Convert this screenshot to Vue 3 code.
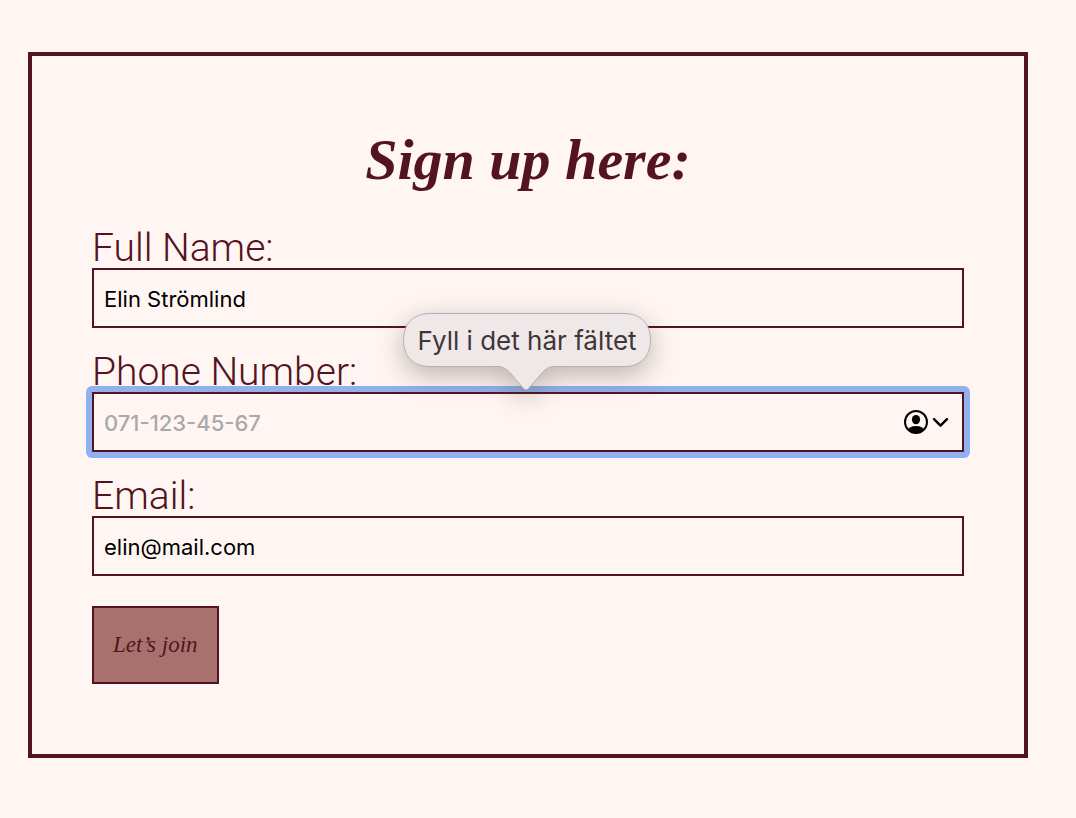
<script setup>
import { ref } from 'vue'

const name = ref('Elin Strömlind')
const phone = ref('')
const email = ref('elin@mail.com')
</script>

<template>
  <main class="card">
    <h1 class="title">Sign up here:</h1>
    <form class="form" @submit.prevent>
      <div class="field">
        <label class="label" for="name">Full Name:</label>
        <input id="name" v-model="name" class="input" type="text" />
      </div>
      <div class="field">
        <label class="label" for="phone">Phone Number:</label>
        <div class="control">
          <input id="phone" v-model="phone" class="input" type="tel" placeholder="071-123-45-67" />
          <button class="autofill" type="button" aria-label="Autofill contact">
            <svg width="46" height="26" viewBox="0 0 46 26">
              <defs>
                <clipPath id="face"><circle cx="13" cy="13" r="11" /></clipPath>
              </defs>
              <circle cx="13" cy="13" r="11" fill="none" stroke="#000" stroke-width="2" />
              <ellipse cx="13" cy="10.6" rx="4.1" ry="4.7" fill="#000" />
              <ellipse cx="13" cy="22" rx="8.5" ry="5" fill="#000" clip-path="url(#face)" />
              <path d="M31 10.200 L37.500 16.700 L44 10.200" fill="none" stroke="#000" stroke-width="2.4" stroke-linecap="round" stroke-linejoin="round" />
            </svg>
          </button>
          <div class="tip" role="alert">
            <svg class="bubble" width="248" height="78" viewBox="0 0 248 78">
              <path d="M27 .5 H221 C238 .5 247.500 11 247.500 27 C247.500 43 238 53.500 221 53.500 H152 C146 53.500 142 56 138 61 L126 75 Q123 78.500 120 75 L108 61 C104 56 100 53.500 94 53.500 H27 C10 53.500 .5 43 .5 27 C.5 11 10 .5 27 .5 Z" fill="#eee8e8" stroke="#b5afae" stroke-width="1" />
            </svg>
            <span class="message">Fyll i det här fältet</span>
          </div>
        </div>
      </div>
      <div class="field">
        <label class="label" for="email">Email:</label>
        <input id="email" v-model="email" class="input" type="email" />
      </div>
      <button class="submit" type="submit">Let’s join</button>
    </form>
  </main>
</template>

<style>
body {
  background: #fff6f3;
}
</style>

<style scoped>
.card {
  margin: 52px 48px 60px 28px;
  padding: 60px 60px 70px;
  border: 4px solid #541320;
  color: #541320;
  font-family: Inter, "Liberation Sans", sans-serif;
}
.title {
  margin: 0 0 20px;
  font: italic 700 58px/88px "Liberation Serif", cursive;
  text-align: center;
}
.form {
  display: flex;
  flex-direction: column;
  align-items: flex-start;
  gap: 20px;
}
.field {
  width: 100%;
}
.label {
  display: block;
  padding-top: 4px;
  font: 300 39px/40px Roboto, "Liberation Sans", sans-serif;
}
.control {
  position: relative;
}
.control::before {
  content: "";
  position: absolute;
  inset: -6px;
  border-radius: 6px;
  background: #92b0ee;
}
.input {
  position: relative;
  display: block;
  box-sizing: border-box;
  width: 100%;
  height: 60px;
  padding: 2px 10px 0;
  border: 2px solid #541320;
  border-radius: 0;
  outline: none;
  background: #fff6f3;
  color: #000;
  font: 400 22px/28px Inter, sans-serif;
}
.input::placeholder {
  color: #a9a9a9;
  font-weight: 500;
  opacity: 1;
}
.autofill {
  position: absolute;
  top: 17px;
  right: 15px;
  display: flex;
  padding: 0;
  border: 0;
  background: none;
}
.tip {
  position: absolute;
  bottom: 100%;
  left: 50%;
  width: 250px;
  height: 79px;
  transform: translateX(-50%);
}
.bubble {
  position: absolute;
  top: 0;
  left: 0;
  filter: drop-shadow(0 8px 14px rgba(60, 50, 40, 0.35));
}
.message {
  position: relative;
  display: block;
  width: 248px;
  color: #403638;
  font: 400 26px/56px Inter, sans-serif;
  text-align: center;
  white-space: nowrap;
}
.submit {
  margin-top: 10px;
  height: 78px;
  padding: 0 19px;
  border: 2px solid #541320;
  border-radius: 0;
  background: #a9716d;
  color: #541320;
  font: italic 400 23px/30px "Liberation Serif", cursive;
}
</style>
